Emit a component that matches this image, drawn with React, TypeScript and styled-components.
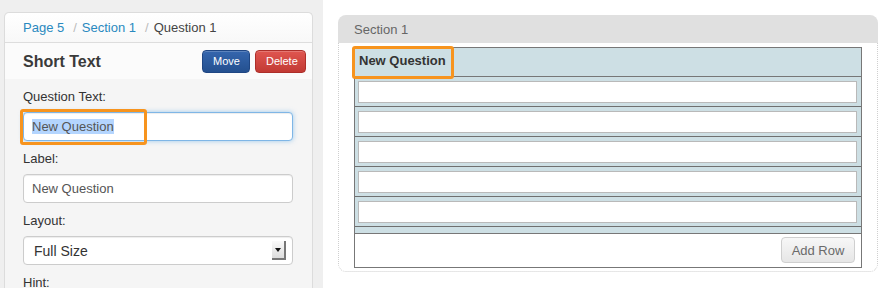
import React from "react";
import styled, { createGlobalStyle } from "styled-components";

const GlobalStyle = createGlobalStyle`
  html, body {
    margin: 0;
    padding: 0;
    background: #fff;
  }
  body {
    font-family: "Liberation Sans", Arial, sans-serif;
    font-size: 13px;
    color: #333;
    width: 886px;
    height: 288px;
    overflow: hidden;
  }
`;

const Page = styled.div`
  display: flex;
  width: 886px;
  height: 288px;
  overflow: hidden;
`;

const Sidebar = styled.div`
  width: 323px;
  flex-shrink: 0;
  background: #efefef;
  padding: 12px 10px 0 4px;
  box-sizing: border-box;
`;

const Panel = styled.div`
  background: #f5f5f5;
  border: 1px solid #dcdcdc;
  border-bottom: none;
  border-radius: 5px 5px 0 0;
  height: 300px;
`;

const Breadcrumb = styled.div`
  display: flex;
  align-items: center;
  height: 29px;
  padding-left: 18px;
  background: linear-gradient(#ffffff, #f8f8f8);
  border-bottom: 1px solid #dddddd;
  border-radius: 5px 5px 0 0;
  font-size: 13px;
`;

const Crumb = styled.span<{ $active?: boolean }>`
  color: ${(p) => (p.$active ? "#444" : "#2a89bf")};
`;

const Divider = styled.span`
  color: #bbb;
  padding: 0 5px 0 9px;
`;

const TitleRow = styled.div`
  display: flex;
  align-items: center;
  justify-content: space-between;
  height: 36px;
  padding: 0 6px 0 18px;
  background: #fbfbfb;
`;

const Title = styled.h2`
  margin: 0;
  font-size: 16px;
  font-weight: bold;
  color: #3a3a3a;
  padding-top: 1px;
`;

const Actions = styled.div`
  display: flex;
  gap: 5px;
`;

const ActionButton = styled.button<{ $tone: "primary" | "danger" }>`
  height: 23px;
  padding: 0 10px;
  font-family: inherit;
  font-size: 11px;
  color: #fff;
  border-radius: 4px;
  border: 1px solid ${(p) => (p.$tone === "primary" ? "#1f4683" : "#ad2f2a")};
  background: ${(p) =>
    p.$tone === "primary"
      ? "linear-gradient(#3566ae, #24508f)"
      : "linear-gradient(#e05650, #c23a34)"};
  box-shadow: inset 0 1px 0 rgba(255, 255, 255, 0.2);
  width: ${(p) => (p.$tone === "primary" ? "48px" : "51px")};
`;

const Form = styled.div`
  padding: 9px 19px 0 18px;
`;

const Field = styled.div`
  margin-bottom: 9px;
  position: relative;
`;

const Label = styled.div`
  line-height: 18px;
  height: 18px;
  margin-bottom: 6px;
  font-size: 13px;
  color: #333;
`;

const TextBox = styled.div<{ $focus?: boolean }>`
  position: relative;
  width: 270px;
  height: 29px;
  box-sizing: border-box;
  display: flex;
  align-items: center;
  padding-left: 8px;
  background: #fff;
  border: 1px solid ${(p) => (p.$focus ? "#7fb6e6" : "#cccccc")};
  border-radius: 4px;
  box-shadow: ${(p) =>
    p.$focus
      ? "inset 0 1px 1px rgba(0,0,0,0.075), 0 0 5px rgba(102,175,233,0.6)"
      : "inset 0 1px 1px rgba(0,0,0,0.075)"};
  font-size: 13px;
  color: #555;
`;

const Selected = styled.span`
  background: #b4d5fe;
`;

const Highlight = styled.div<{ $w: number; $h: number; $l: number; $t: number }>`
  position: absolute;
  left: ${(p) => p.$l}px;
  top: ${(p) => p.$t}px;
  width: ${(p) => p.$w}px;
  height: ${(p) => p.$h}px;
  box-sizing: border-box;
  border: 3px solid #f7941e;
  border-radius: 3px;
  pointer-events: none;
`;

const SelectBox = styled(TextBox)`
  padding-left: 10px;
  justify-content: space-between;
  padding-right: 6px;
  font-size: 14px;
  color: #333;
`;

const SelectArrow = styled.div`
  width: 14px;
  height: 19px;
  box-sizing: border-box;
  background: linear-gradient(#fafafa, #dcdcdc);
  border-right: 2px solid #777;
  border-bottom: 2px solid #777;
  display: flex;
  align-items: center;
  justify-content: center;
  &::after {
    content: "";
    border-left: 3px solid transparent;
    border-right: 3px solid transparent;
    border-top: 4px solid #111;
  }
`;

const Canvas = styled.div`
  flex: 1;
  padding: 15px 8px 0 15px;
`;

const Section = styled.div`
  width: 540px;
  border-radius: 8px;
`;

const SectionHeader = styled.div`
  height: 28px;
  display: flex;
  align-items: center;
  padding-left: 16px;
  background: #e0e0e0;
  border-radius: 8px 8px 0 0;
  color: #666;
  font-size: 13px;
`;

const SectionBody = styled.div`
  border: 1px dotted #cfcfcf;
  border-top: none;
  border-radius: 0 0 8px 8px;
  padding: 4px 15px 3px 15px;
`;

const Grid = styled.div`
  border: 1px solid #777;
  position: relative;
`;

const GridHead = styled.div`
  height: 29px;
  display: flex;
  align-items: center;
  padding: 0 0 3px 4px;
  box-sizing: border-box;
  background: #cddfe4;
  border-bottom: 1px solid #777;
  font-weight: bold;
  font-size: 13px;
  color: #333;
`;

const GridRow = styled.div`
  padding: 4px 4px 0 3px;
  box-sizing: border-box;
  height: 30px;
  background: #cddfe4;
  border-bottom: 1px solid #6f6f6f;
`;

const Cell = styled.div`
  height: 22px;
  box-sizing: border-box;
  background: #fff;
  border: 1px solid #b9b9b9;
`;

const Spacer = styled.div`
  height: 6px;
  background: #cddfe4;
  border-bottom: 1px solid #777;
`;

const GridFoot = styled.div`
  height: 33px;
  display: flex;
  justify-content: flex-end;
  align-items: flex-start;
  padding: 3px 6px 0 0;
  box-sizing: border-box;
  background: #fff;
`;

const AddButton = styled.button`
  width: 74px;
  height: 26px;
  font-family: inherit;
  font-size: 13px;
  color: #6a6a6a;
  background: linear-gradient(#f7f7f7, #e6e6e6);
  border: 1px solid #cfcfcf;
  border-radius: 4px;
`;

const rows = [0, 1, 2, 3, 4];

export default function App() {
  return (
    <>
      <GlobalStyle />
      <Page>
        <Sidebar>
          <Panel>
            <Breadcrumb>
              <Crumb>Page 5</Crumb>
              <Divider>/</Divider>
              <Crumb>Section 1</Crumb>
              <Divider>/</Divider>
              <Crumb $active>Question 1</Crumb>
            </Breadcrumb>
            <TitleRow>
              <Title>Short Text</Title>
              <Actions>
                <ActionButton $tone="primary">Move</ActionButton>
                <ActionButton $tone="danger">Delete</ActionButton>
              </Actions>
            </TitleRow>
            <Form>
              <Field>
                <Label>Question Text:</Label>
                <TextBox $focus>
                  <Selected>New Question</Selected>
                  <Highlight $l={-4} $t={-4} $w={127} $h={36} />
                </TextBox>
              </Field>
              <Field>
                <Label>Label:</Label>
                <TextBox>New Question</TextBox>
              </Field>
              <Field>
                <Label>Layout:</Label>
                <SelectBox>
                  <span>Full Size</span>
                  <SelectArrow />
                </SelectBox>
              </Field>
              <Field>
                <Label>Hint:</Label>
              </Field>
            </Form>
          </Panel>
        </Sidebar>
        <Canvas>
          <Section>
            <SectionHeader>Section 1</SectionHeader>
            <SectionBody>
              <Grid>
                <GridHead>New Question</GridHead>
                <Highlight $l={-3} $t={-2} $w={102} $h={33} />
                {rows.map((r) => (
                  <GridRow key={r}>
                    <Cell />
                  </GridRow>
                ))}
                <Spacer />
                <GridFoot>
                  <AddButton>Add Row</AddButton>
                </GridFoot>
              </Grid>
            </SectionBody>
          </Section>
        </Canvas>
      </Page>
    </>
  );
}
